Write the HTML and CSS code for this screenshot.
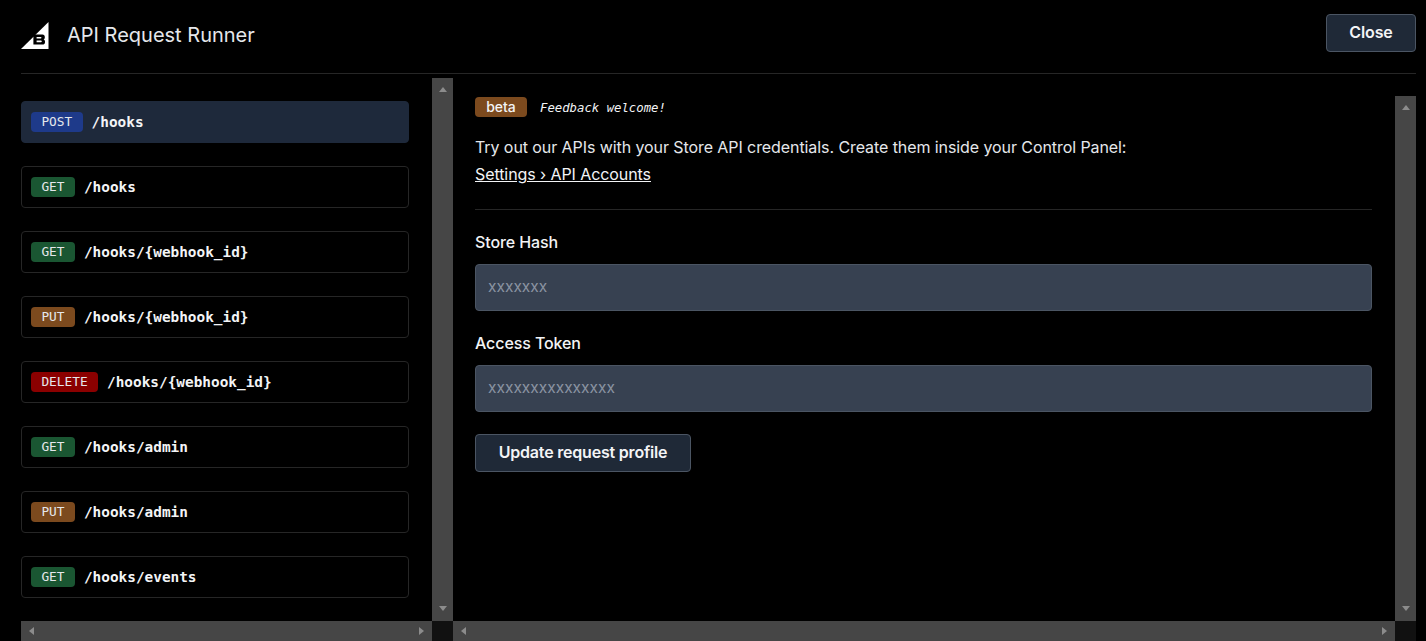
FILE: index.html
```html
<!DOCTYPE html>
<html lang="en">
<head>
  <meta charset="UTF-8">
  <meta name="viewport" content="width=device-width, initial-scale=1.0">
  <title>API Request Runner</title>
  <link rel="stylesheet" href="styles.css">
</head>
<body>
  <header class="top-bar">
    <div class="brand">
      <svg class="logo" width="28" height="27" viewBox="0 0 28 27">
        <path fill="#fff" d="M27.5 0V27H0z"/>
        <path fill="#000" d="M11.7 12.6H21.5C23 12.6 23.8 13.6 23.8 15V15.8C23.8 16.7 23.3 17.2 22.6 17.5 23.4 17.8 24 18.5 24 19.4V20.3C24 21.7 23 22.6 21.5 22.6H12.4V15z"/>
        <path fill="#fff" d="M15.6 15H19.6C20.2 15 20.5 15.3 20.5 15.8 20.5 16.3 20.2 16.6 19.6 16.6H15.6zM15.6 18.6H19.9C20.5 18.6 20.8 18.9 20.8 19.4 20.8 19.9 20.5 20.2 19.9 20.2H15.6z"/>
      </svg>
      <span class="title">API Request Runner</span>
    </div>
    <button class="btn">Close</button>
  </header>

  <main class="panes">
    <section class="list-pane">
      <div class="list-row">
        <ul class="endpoints">
          <li class="endpoint active"><span class="method post">POST</span><span class="path">/hooks</span></li>
          <li class="endpoint"><span class="method get">GET</span><span class="path">/hooks</span></li>
          <li class="endpoint"><span class="method get">GET</span><span class="path">/hooks/{webhook_id}</span></li>
          <li class="endpoint"><span class="method put">PUT</span><span class="path">/hooks/{webhook_id}</span></li>
          <li class="endpoint"><span class="method delete">DELETE</span><span class="path">/hooks/{webhook_id}</span></li>
          <li class="endpoint"><span class="method get">GET</span><span class="path">/hooks/admin</span></li>
          <li class="endpoint"><span class="method put">PUT</span><span class="path">/hooks/admin</span></li>
          <li class="endpoint"><span class="method get">GET</span><span class="path">/hooks/events</span></li>
        </ul>
        <div class="vbar list-vbar"><i class="arrow up"></i><i class="arrow down"></i></div>
      </div>
      <div class="hbar-row">
        <div class="hbar"><i class="arrow left"></i><i class="arrow right"></i></div>
        <div class="corner"></div>
      </div>
    </section>

    <section class="form-pane">
      <div class="form-row">
        <div class="form-body">
          <div class="notice">
            <span class="beta">beta</span>
            <em class="feedback">Feedback welcome!</em>
          </div>
          <p class="intro">Try out our APIs with your Store API credentials. Create them inside your Control Panel:<br><a href="#">Settings › API Accounts</a></p>
          <hr class="divider">
          <label class="field-label" for="storeHash">Store Hash</label>
          <input class="field" id="storeHash" type="text" placeholder="xxxxxxx">
          <label class="field-label" for="accessToken">Access Token</label>
          <input class="field" id="accessToken" type="text" placeholder="xxxxxxxxxxxxxxx">
          <button class="btn update-btn">Update request profile</button>
        </div>
        <div class="vbar"><i class="arrow up"></i><i class="arrow down"></i></div>
      </div>
      <div class="hbar-row">
        <div class="hbar"><i class="arrow left"></i><i class="arrow right"></i></div>
        <div class="corner"></div>
      </div>
    </section>
  </main>
</body>
</html>
```

FILE: styles.css
```css
* {
  box-sizing: border-box;
}

html, body {
  height: 641px;
  overflow: hidden;
}

body {
  margin: 0;
  padding: 0 10px 0 21px;
  background-color: #000;
  color: #f3f4f6;
  font-family: Inter, "Liberation Sans", sans-serif;
  font-size: 16px;
  display: flex;
  flex-direction: column;
}

.top-bar {
  height: 74px;
  flex-shrink: 0;
  display: flex;
  justify-content: space-between;
  align-items: flex-start;
  padding-top: 14px;
  border-bottom: 1px solid #262626;
}

.brand {
  display: flex;
  align-items: center;
  padding-top: 7px;
}

.logo {
  display: block;
}

.title {
  margin-left: 18px;
  font-size: 20px;
  line-height: 28px;
  color: #e5e7eb;
}

.btn {
  height: 38px;
  width: 90px;
  padding: 0 0 2px;
  background-color: #1f2937;
  border: 1px solid #4b5563;
  border-radius: 4px;
  color: #f3f4f6;
  font-family: inherit;
  font-size: 16px;
  font-weight: 600;
  letter-spacing: -0.1px;
  cursor: pointer;
}

.panes {
  flex: 1;
  display: flex;
  min-height: 0;
}

/* left column */
.list-pane {
  width: 432px;
  display: flex;
  flex-direction: column;
}

.list-row {
  flex: 1;
  display: flex;
  min-height: 0;
}

.endpoints {
  list-style: none;
  margin: 0;
  padding: 27px 0 0;
  width: 388px;
  display: flex;
  flex-direction: column;
  gap: 23px;
}

.endpoint {
  height: 42px;
  display: flex;
  align-items: center;
  gap: 9px;
  padding: 0 9px;
  border: 1px solid #262626;
  border-radius: 4px;
  font-family: "DejaVu Sans Mono", monospace;
}

.endpoint.active {
  background-color: #1e293b;
  border-color: #1e293b;
}

.method {
  height: 20px;
  padding: 0 10.4px;
  border-radius: 4px;
  font-size: 12.8px;
  line-height: 19px;
  color: #e5e7eb;
}

.post { background-color: #1e3a8a; }
.get { background-color: #1a5632; }
.put { background-color: #7c4a1e; }
.delete { background-color: #8b0000; }

.path {
  font-size: 14.4px;
  font-weight: 700;
  color: #f3f4f6;
}

/* fake scrollbars, drawn the way the browser shows them */
.vbar {
  width: 21px;
  flex-shrink: 0;
  background-color: #464646;
  display: flex;
  flex-direction: column;
  justify-content: space-between;
  align-items: center;
  padding: 9px 0 10px;
}

.list-vbar {
  margin: 4px 0 0 23px;
}

.hbar-row {
  height: 20px;
  flex-shrink: 0;
  display: flex;
}

.hbar {
  flex: 1;
  background-color: #464646;
  display: flex;
  justify-content: space-between;
  align-items: center;
  padding: 0 8px;
}

.corner {
  width: 21px;
  background-color: #111;
}

.arrow {
  display: block;
  width: 0;
  height: 0;
  border: 4.5px solid transparent;
}

.arrow.up {
  border-top: 0;
  border-bottom: 5px solid #8c8c8c;
}

.arrow.down {
  border-bottom: 0;
  border-top: 5px solid #8c8c8c;
}

.arrow.left {
  border-left: 0;
  border-right: 5px solid #8c8c8c;
}

.arrow.right {
  border-right: 0;
  border-left: 5px solid #8c8c8c;
}

/* right column */
.form-pane {
  flex: 1;
  display: flex;
  flex-direction: column;
}

.form-row {
  flex: 1;
  display: flex;
  min-height: 0;
  margin-top: 22px;
}

.form-body {
  flex: 1;
  padding: 1px 23px 0 22px;
}

.notice {
  display: flex;
  align-items: center;
  height: 20px;
}

.beta {
  width: 52px;
  height: 20px;
  background-color: #7c4a1e;
  border-radius: 4px;
  text-align: center;
  font-size: 14px;
  font-weight: 500;
  line-height: 20px;
  color: #f3f4f6;
}

.feedback {
  margin: 1px 0 0 13px;
  font-family: "DejaVu Sans Mono", monospace;
  font-size: 12.3px;
  color: #f3f4f6;
}

.intro {
  margin: 17px 0 0;
  line-height: 27px;
  letter-spacing: -0.08px;
  color: #e5e7eb;
}

.intro a {
  color: #f3f4f6;
}

.divider {
  margin: 21px 0 0;
  border: 0;
  border-top: 1px solid #262626;
}

.field-label {
  display: block;
  margin-top: 20px;
  line-height: 24px;
  font-weight: 500;
  letter-spacing: -0.1px;
  color: #f3f4f6;
}

.field {
  display: block;
  width: 100%;
  height: 47px;
  margin-top: 10px;
  padding: 0 12px 3px;
  background-color: #374151;
  border: 1px solid #4b5563;
  border-radius: 4px;
  color: #f3f4f6;
  font-family: inherit;
  font-size: 15.5px;
}

.field::placeholder {
  color: #8a93a1;
}

.update-btn {
  display: block;
  width: 216px;
  margin-top: 22px;
  letter-spacing: -0.2px;
}
```
